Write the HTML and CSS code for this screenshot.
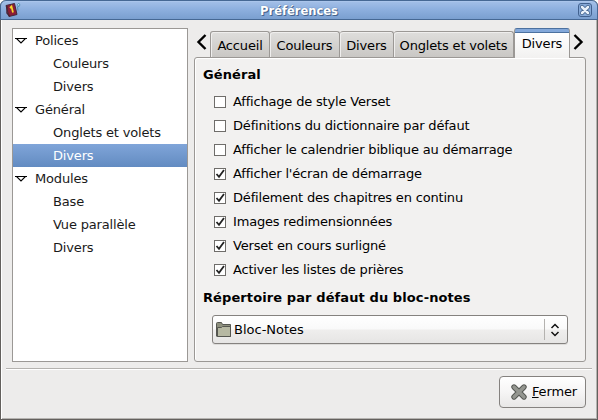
FILE: index.html
```html
<!DOCTYPE html>
<html lang="fr">
<head>
<meta charset="utf-8">
<title>Préférences</title>
<link rel="stylesheet" href="styles.css">
</head>
<body>
<svg class="defs" width="0" height="0">
  <symbol id="tri" viewBox="0 0 12 8"><path d="M1.500 1.500h9L6 6z" fill="#fff" stroke="#000" stroke-width="1.100"/><path d="M0 1.500h12" stroke="#000"/></symbol>
  <symbol id="check" viewBox="0 0 12 12"><path d="M2.500 6 5 8.800 10 2" fill="none" stroke="#222" stroke-width="1.800"/></symbol>
</svg>
<div class="window">
  <header class="titlebar">
    <svg class="app-icon" width="17" height="16" viewBox="0 0 17 16">
      <path d="M1 3.500 9.500 1.500 12 12.500 4 14.500z" fill="#8d1d35" stroke="#432638"/>
      <path d="M2 4v7l2.500 3" fill="none" stroke="#4b2536" stroke-width="1.500"/>
      <path d="M5 6 6.500 4.500 8 10.500" fill="none" stroke="#f4d62c" stroke-width="1.800"/>
      <path d="M12.500 2.500 13.800 1.200 15 3l-1.300 1.800zM12.500 4.500l.5 4" fill="#b7e2ee" stroke="#4188a8" stroke-width=".8"/>
    </svg>
    <h1>Préférences</h1>
    <svg class="close" width="15" height="15" viewBox="0 0 15 15">
      <rect x=".5" y=".5" width="13" height="13" rx="2.500" fill="#86a9d8" stroke="#41618f"/>
      <path d="m4 4 6 6m0-6L4 10" stroke="#45658f" stroke-width="4.200" stroke-linecap="round"/>
      <path d="m4 4 6 6m0-6L4 10" stroke="#e8f0fa" stroke-width="2.500" stroke-linecap="round"/>
    </svg>
  </header>
  <main class="content">
    <nav class="tree">
      <div class="row"><svg width="12" height="8"><use href="#tri"/></svg>Polices</div>
      <div class="row child">Couleurs</div>
      <div class="row child">Divers</div>
      <div class="row"><svg width="12" height="8"><use href="#tri"/></svg>Général</div>
      <div class="row child">Onglets et volets</div>
      <div class="row child selected">Divers</div>
      <div class="row"><svg width="12" height="8"><use href="#tri"/></svg>Modules</div>
      <div class="row child">Base</div>
      <div class="row child">Vue parallèle</div>
      <div class="row child">Divers</div>
    </nav>
    <section class="notebook">
      <div class="tabs">
        <svg class="arrow" width="16" height="16" viewBox="0 0 16 16"><path d="M11.500 1 4.500 8l7 7" fill="none" stroke="#000" stroke-width="2.400"/></svg>
        <div class="tab t1">Accueil</div>
        <div class="tab t2">Couleurs</div>
        <div class="tab t3">Divers</div>
        <div class="tab t4">Onglets et volets</div>
        <div class="tab active">Divers</div>
        <svg class="arrow" width="16" height="16" viewBox="0 0 16 16"><path d="m4.500 1 7 7-7 7" fill="none" stroke="#000" stroke-width="2.400"/></svg>
      </div>
      <div class="page">
        <h2>Général</h2>
        <div class="options">
          <div class="option"><span class="box"></span>Affichage de style Verset</div>
          <div class="option"><span class="box"></span>Définitions du dictionnaire par défaut</div>
          <div class="option"><span class="box"></span>Afficher le calendrier biblique au démarrage</div>
          <div class="option"><span class="box"><svg width="12" height="12"><use href="#check"/></svg></span>Afficher l'écran de démarrage</div>
          <div class="option"><span class="box"><svg width="12" height="12"><use href="#check"/></svg></span>Défilement des chapitres en continu</div>
          <div class="option"><span class="box"><svg width="12" height="12"><use href="#check"/></svg></span>Images redimensionnées</div>
          <div class="option"><span class="box"><svg width="12" height="12"><use href="#check"/></svg></span>Verset en cours surligné</div>
          <div class="option"><span class="box"><svg width="12" height="12"><use href="#check"/></svg></span>Activer les listes de prières</div>
        </div>
        <h2 class="second">Répertoire par défaut du bloc-notes</h2>
        <div class="combo">
          <svg width="16" height="16" viewBox="0 0 16 16">
            <path d="M.5 14V1.500Q.5.5 1.500.5H5.500L6.500 2.500H14.500V14.500H1.500Q.5 14.500.5 14z" fill="#8d8f7d" stroke="#555650"/>
            <path d="M1.500 5.500H5.500L6.500 4.500H14.500V14.500H1.500z" fill="#b6b8a2" stroke="#555650"/>
          </svg>
          <span>Bloc-Notes</span>
          <svg class="updown" width="10" height="14" viewBox="0 0 10 14"><path d="m1.500 5 3.500-3.500L8.500 5M1.500 9 5 12.500 8.500 9" fill="none" stroke="#111" stroke-width="1.500"/></svg>
        </div>
      </div>
    </section>
  </main>
  <footer class="actions">
    <div class="button">
      <svg width="18" height="18" viewBox="0 0 18 18">
        <path d="m4 4 10 10M14 4 4 14" stroke="#555753" stroke-width="5.400" stroke-linecap="round"/>
        <path d="m4 4 10 10M14 4 4 14" stroke="#949690" stroke-width="3.400" stroke-linecap="round"/>
      </svg>
      <span><u>F</u>ermer</span>
    </div>
  </footer>
</div>
</body>
</html>
```
FILE: styles.css
```css
* { box-sizing: border-box; }
body {
  margin: 0;
  width: 598px;
  height: 420px;
  overflow: hidden;
  background: #fff;
  font: 13px/16px "DejaVu Sans", sans-serif;
  letter-spacing: -.17px;
  color: #000;
}
svg { display: block; flex: none; }
.defs { position: absolute; }
.window {
  width: 598px;
  height: 420px;
  display: flex;
  flex-direction: column;
  background: #edeceb;
  border: 1px solid #63605d;
  border-top: 0;
  border-radius: 6px 6px 0 0;
  box-shadow: inset 1px 0 #fff, inset -1px -1px #b5b3b0;
}
.titlebar {
  height: 20px;
  margin: 0 -1px;
  padding: 0 4px;
  display: flex;
  align-items: center;
  justify-content: space-between;
  border: 1px solid #466894;
  border-radius: 6px 6px 0 0;
  background: linear-gradient(#a4c0e8, #8eb0df 45%, #7a9fd0);
  box-shadow: inset 0 1px #aac5eb;
}
.titlebar h1 {
  margin: 1px 2px 0 0;
  font-size: 11.5px;
  letter-spacing: 0;
  color: #fff;
  text-shadow: 1px 1px #46628b, 0 0 1px #46628b;
}
.content {
  display: flex;
  padding: 8px 11px 0;
  height: 342px;
}
.tree {
  width: 176px;
  height: 334px;
  margin-right: 6px;
  background: #fff;
  border: 1px solid #9b9895;
  color: #1a1a1a;
}
.row {
  height: 23px;
  display: flex;
  align-items: center;
  gap: 8px;
  padding: 1px 0 0 2px;
}
.child { padding-left: 40px; }
.selected {
  color: #fff;
  background: linear-gradient(#80a5d9, #628bc1);
}
.notebook { width: 392px; }
.tabs {
  height: 29px;
  display: flex;
  align-items: flex-end;
}
.tab {
  height: 26px;
  padding-top: 6px;
  text-align: center;
  border: 1px solid #9b9895;
  border-left-width: 0;
  border-bottom: 0;
  border-radius: 3px 3px 0 0;
  background: linear-gradient(#dfdedc, #c9c7c4);
  box-shadow: inset 1px 1px #efeeed;
  white-space: nowrap;
}
.t1 { width: 60px; border-left-width: 1px; }
.t2 { width: 70px; }
.t3 { width: 54px; }
.t4 { width: 120px; }
.active {
  width: 56px;
  height: 30px;
  margin-bottom: -1px;
  padding-top: 7px;
  border: 1px solid #9b9895;
  border-top: 1px solid #4c719f;
  border-bottom: 0;
  background: linear-gradient(#83a8da 3px, #4c719f 3px, #4c719f 4px, #fff 4px, #f2f1f0);
  box-shadow: none;
  z-index: 1;
}
.arrow { margin-bottom: 7px; }
.page {
  height: 305px;
  padding: 9px 17px 0;
  border: 1px solid #9b9895;
  border-radius: 3px;
  background: #f2f1f0;
  box-shadow: inset 1px 1px #fff;
}
h2 {
  margin: 0 0 7px -9px;
  font-size: 13px;
  line-height: 16px;
  letter-spacing: .1px;
}
.option {
  height: 24px;
  display: flex;
  align-items: center;
  gap: 7px;
  padding-left: 2px;
  letter-spacing: -.18px;
}
.box {
  width: 12px;
  height: 12px;
  border: 1px solid #6f6d6a;
  background: #fff;
}
.box svg { margin: -1px; }
.second { margin: 8px 0 9px -9px; }
.combo {
  width: 356px;
  height: 29px;
  display: flex;
  align-items: center;
  padding: 0 7px 0 3px;
  border: 1px solid #85827f;
  border-radius: 3px;
  background: linear-gradient(#fff, #f9f9f9 49%, #efeeed 51%, #e6e5e4);
  box-shadow: 0 1px #dddcda;
}
.combo span {
  height: 21px;
  padding: 3px 0 0 2px;
  flex: 1;
  letter-spacing: 0;
  border-right: 1px solid #b4b2af;
  margin-right: 5px;
}
.actions {
  height: 50px;
  margin: 6px 5px 0;
  padding: 7px 6px 0;
  border-top: 1px solid #b4b2af;
  box-shadow: inset 0 1px #fff;
  display: flex;
  justify-content: flex-end;
}
.button {
  width: 87px;
  height: 32px;
  display: flex;
  align-items: center;
  gap: 4px;
  padding-left: 10px;
  border: 1px solid #85827f;
  border-radius: 4px;
  background: linear-gradient(#fff, #f6f5f5 50%, #e8e7e6);
}
```
